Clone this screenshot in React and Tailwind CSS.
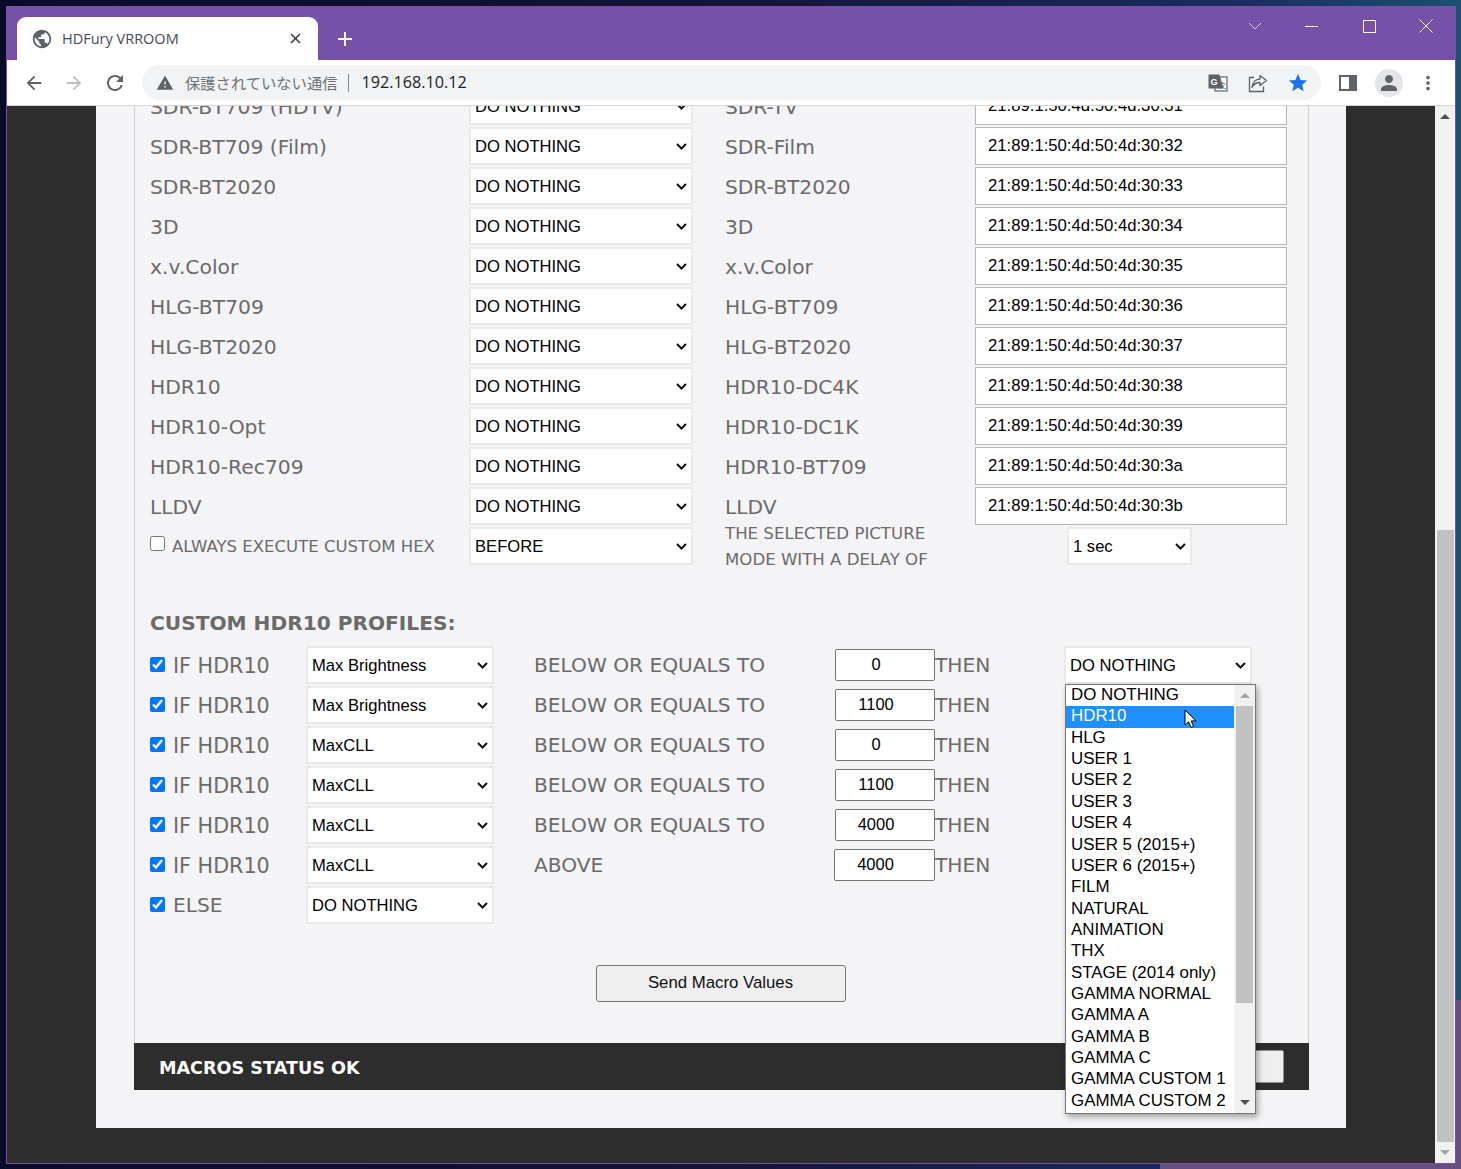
import React from "react";
import { MdArrowBack, MdArrowForward, MdRefresh, MdPublic, MdWarning, MdPerson, MdStar, MdMoreVert, MdClose, MdAdd } from "react-icons/md";

const PROFILE_ROWS = [
  ["SDR-BT709 (HDTV)", "SDR-TV", "21:89:1:50:4d:50:4d:30:31"],
  ["SDR-BT709 (Film)", "SDR-Film", "21:89:1:50:4d:50:4d:30:32"],
  ["SDR-BT2020", "SDR-BT2020", "21:89:1:50:4d:50:4d:30:33"],
  ["3D", "3D", "21:89:1:50:4d:50:4d:30:34"],
  ["x.v.Color", "x.v.Color", "21:89:1:50:4d:50:4d:30:35"],
  ["HLG-BT709", "HLG-BT709", "21:89:1:50:4d:50:4d:30:36"],
  ["HLG-BT2020", "HLG-BT2020", "21:89:1:50:4d:50:4d:30:37"],
  ["HDR10", "HDR10-DC4K", "21:89:1:50:4d:50:4d:30:38"],
  ["HDR10-Opt", "HDR10-DC1K", "21:89:1:50:4d:50:4d:30:39"],
  ["HDR10-Rec709", "HDR10-BT709", "21:89:1:50:4d:50:4d:30:3a"],
  ["LLDV", "LLDV", "21:89:1:50:4d:50:4d:30:3b"],
];

const HDR_ROWS = [
  ["Max Brightness", "BELOW OR EQUALS TO", "0"],
  ["Max Brightness", "BELOW OR EQUALS TO", "1100"],
  ["MaxCLL", "BELOW OR EQUALS TO", "0"],
  ["MaxCLL", "BELOW OR EQUALS TO", "1100"],
  ["MaxCLL", "BELOW OR EQUALS TO", "4000"],
  ["MaxCLL", "ABOVE", "4000"],
];

const MENU = ["DO NOTHING", "HDR10", "HLG", "USER 1", "USER 2", "USER 3", "USER 4", "USER 5 (2015+)", "USER 6 (2015+)", "FILM", "NATURAL", "ANIMATION", "THX", "STAGE (2014 only)", "GAMMA NORMAL", "GAMMA A", "GAMMA B", "GAMMA C", "GAMMA CUSTOM 1", "GAMMA CUSTOM 2"];

function Sel({ value, className }) {
  return (
    <div className={`relative h-[38px] ${className}`}>
      <select defaultValue={value} className="appearance-none w-full h-full bg-white border-2 border-[#e9e9e9] pl-[4px] pt-[2px] text-[16.6px] text-black font-['Liberation_Sans',sans-serif]">
        <option>{value}</option>
      </select>
      <svg width="11" height="7" viewBox="0 0 11 7" className="absolute right-[6px] top-[16px] pointer-events-none">
        <path d="M1 1l4.5 4.5L10 1" fill="none" stroke="#111" strokeWidth="2" />
      </svg>
    </div>
  );
}

function WindowControls() {
  return (
    <div className="flex items-center text-white">
      <svg width="14" height="8" viewBox="0 0 14 8" className="mr-[43px]"><path d="M1 1l6 6 6-6" fill="none" stroke="#d9c9ea" strokeWidth="1" /></svg>
      <div className="w-[13px] h-px bg-white mr-[45px]" />
      <div className="w-[13px] h-[13px] border border-white mr-[43px]" />
      <svg width="14" height="14" viewBox="0 0 14 14"><path d="M0.5 0.5l13 13M13.5 0.5l-13 13" stroke="#fff" strokeWidth="1" /></svg>
    </div>
  );
}

function TranslateIcon() {
  return (
    <svg width="20" height="20" viewBox="0 0 20 20">
      <rect x="7" y="4" width="12" height="14" fill="#fff" stroke="#5f6368" strokeWidth="1.2" />
      <path d="M0.5 1.5h11l4 14h-15z" fill="#5f6368" />
      <text x="2.5" y="11.5" fontSize="9" fontWeight="700" fill="#fff" fontFamily="Liberation Sans, sans-serif">G</text>
      <text x="11" y="15" fontSize="7" fill="#5f6368" fontFamily="Noto Sans CJK SC, sans-serif">文</text>
    </svg>
  );
}

function ShareIcon() {
  return (
    <svg width="20" height="20" viewBox="0 0 20 20" fill="none" stroke="#5f6368" strokeWidth="1.3">
      <path d="M6 4.5H1.5v14h14v-5" />
      <path d="M12 2.5l6.5 5-6.5 5V9.5c-4 0-6.5 1.5-8 5 .5-5 3.5-8.5 8-8.5z" strokeLinejoin="round" />
    </svg>
  );
}

function Cursor() {
  return (
    <svg width="14" height="20" viewBox="0 0 14 20" className="absolute left-[118px] top-[24px]">
      <path d="M1 1v15l3.6-3.2 2.4 5.6 2.6-1.1-2.4-5.4h5z" fill="#fff" stroke="#000" strokeWidth="1" />
    </svg>
  );
}

function Dropdown() {
  return (
    <div className="absolute left-[1px] top-[38px] w-[191px] h-[430px] z-10 flex bg-white border border-[#767676] shadow-[2px_3px_6px_rgba(0,0,0,0.35)] text-[16.9px] text-black font-['Liberation_Sans',sans-serif]">
      <div className="w-[168px]">
        {MENU.map((m) => (
          <div key={m} className={`h-[21.37px] pl-[5px] leading-[20px] whitespace-nowrap ${m === "HDR10" ? "bg-[#1e90ff] text-white" : ""}`}>{m}</div>
        ))}
      </div>
      <div className="w-[21px] bg-[#f1f1f1] flex flex-col items-center">
        <div className="h-[21px] flex items-center justify-center">
          <div className="w-0 h-0 border-l-[5px] border-r-[5px] border-b-[5px] border-l-transparent border-r-transparent border-b-[#a3a3a3]" />
        </div>
        <div className="w-[17px] h-[297px] bg-[#c1c1c1]" />
        <div className="mt-auto h-[21px] flex items-center justify-center">
          <div className="w-0 h-0 border-l-[5px] border-r-[5px] border-t-[5px] border-l-transparent border-r-transparent border-t-[#505050]" />
        </div>
      </div>
      <Cursor />
    </div>
  );
}

export default function App() {
  return (
    <div className="relative w-[1461px] h-[1169px] overflow-hidden pt-[6px] pl-[6px] bg-[linear-gradient(90deg,#0a0b28_0%,#141536_50%,#1b2c60_85%,#1a5070_100%)]">
      {/* wallpaper patch showing below the window */}
      <div className="absolute left-[1160px] top-[1164px] w-[301px] h-[5px] bg-[#65507f]" />
      <div className="absolute left-[1456px] top-[1000px] w-[5px] h-[169px] bg-[#65507f]" />
      <div className="relative w-[1450px] h-[1158px] border border-[#7750a7] flex flex-col bg-[#2d2d2d] font-['DejaVu_Sans',sans-serif]">
        {/* title bar */}
        <div className="h-[53px] bg-[#7750a7] flex shrink-0 relative">
          <div className="ml-[10px] mt-[10px] w-[301px] h-[43px] bg-white rounded-t-[9px] flex items-center pl-[16px] pr-[14px] font-['Open_Sans',sans-serif] text-[14.5px] text-[#45494d]">
            <MdPublic size={22} className="text-[#5f6368] -ml-[2px]" />
            <span className="ml-[9px]">HDFury VRROOM</span>
            <MdClose size={17} className="ml-auto text-[#303336]" />
          </div>
          <MdAdd size={24} className="text-white ml-[15px] mt-[20px]" />
          <div className="ml-auto mr-[22px] mt-[12px] h-[13px]"><WindowControls /></div>
        </div>
        {/* toolbar */}
        <div className="h-[46px] bg-white border-b border-[#d5d5d5] flex items-center shrink-0 text-[#5f6368]">
          <MdArrowBack size={22} className="ml-[16px]" />
          <MdArrowForward size={22} className="ml-[18px] text-[#bdc1c6]" />
          <MdRefresh size={24} className="ml-[18px]" />
          <div className="ml-[15px] w-[1179px] h-[35px] rounded-full bg-[#f1f3f4] flex items-center pl-[14px] pr-[12px]">
            <MdWarning size={18} />
            <span className="ml-[11px] text-[15.3px] text-[#6f7377] font-['Noto_Sans_CJK_JP',sans-serif] whitespace-nowrap">保護されていない通信</span>
            <div className="ml-[10px] w-px h-[18px] bg-[#85888c]" />
            <span className="ml-[13px] text-[16.2px] text-[#202124] font-['Open_Sans',sans-serif]">192.168.10.12</span>
            <div className="ml-auto flex items-center gap-[20px]">
              <TranslateIcon />
              <ShareIcon />
              <MdStar size={22} className="text-[#1a73e8] -ml-px" />
            </div>
          </div>
          <div className="ml-[18px] w-[18px] h-[16px] bg-[#5f6368] p-[2px] pr-[8px]"><div className="w-[8px] h-[12px] bg-white" /></div>
          <div className="ml-[18px] w-[28px] h-[28px] rounded-full bg-[#e3e5e8] flex items-center justify-center"><MdPerson size={24} /></div>
          <MdMoreVert size={22} className="ml-[14px]" />
        </div>
        {/* page */}
        <div className="flex-1 flex min-h-0">
          <div className="flex-1 overflow-hidden">
            <div className="ml-[89px] w-[1250px] h-[1042px] -mt-[20px] bg-[#f4f3f6] pl-[38px] pr-[37px] relative">
              <div className="h-[1004px] border-x border-[#cccccc] flex flex-col text-[#6b6b6b]">
                <div className="pl-[15px]">
                  {PROFILE_ROWS.map(([left, right, hex]) => (
                    <div key={left} className="h-10 flex items-center">
                      <div className="w-[319px] pt-[2px] text-[20.3px] whitespace-nowrap">{left}</div>
                      <Sel value="DO NOTHING" className="w-[224px]" />
                      <div className="ml-[32px] w-[250px] pt-[2px] text-[20.2px]">{right}</div>
                      <input readOnly value={hex} className="w-[312px] h-[38px] bg-white border border-[#b5b5b5] pl-[12px] pb-[1px] text-[16.7px] text-black font-['Liberation_Sans',sans-serif]" />
                    </div>
                  ))}
                  <div className="h-10 flex items-center">
                    <div className="w-[319px] flex items-center text-[16.55px] whitespace-nowrap">
                      <input type="checkbox" className="w-[15px] h-[15px] m-0 -mt-[5px]" />
                      <span className="ml-[7px] pt-[2px]">ALWAYS EXECUTE CUSTOM HEX</span>
                    </div>
                    <Sel value="BEFORE" className="w-[224px]" />
                    <div className="ml-[32px] w-[342px] pt-[2px] text-[16.6px] leading-[26px] whitespace-nowrap">THE SELECTED PICTURE<br />MODE WITH A DELAY OF</div>
                    <Sel value="1 sec" className="w-[125px]" />
                  </div>
                  <div className="mt-[40px] h-[39px] text-[20.15px] font-bold leading-[34px] whitespace-nowrap">CUSTOM HDR10 PROFILES:</div>
                  {HDR_ROWS.map(([sel, cond, val], i) => (
                    <div key={i} className="h-10 flex items-center">
                      <input type="checkbox" defaultChecked className="w-[15px] h-[15px] m-0 -mt-[1px]" />
                      <span className="ml-[8px] w-[133px] pt-[3px] text-[20.7px] whitespace-nowrap">IF HDR10</span>
                      <Sel value={sel} className="w-[188px]" />
                      <span className={`ml-[40px] text-[20.15px] whitespace-nowrap ${i === 5 ? "w-[300px]" : "w-[301px]"}`}>{cond}</span>
                      <input readOnly value={val} className={`h-[32px] bg-white border border-[#767676] rounded-[2px] text-center pr-[18px] pb-[2px] text-[16.5px] text-black font-['Liberation_Sans',sans-serif] ${i === 5 ? "w-[101px]" : "w-[100px]"}`} />
                      <span className="w-[129px] text-[20.2px]">THEN</span>
                      {i === 0 ? (
                        <div className="relative h-[38px]">
                          <Sel value="DO NOTHING" className="w-[188px]" />
                          <Dropdown />
                        </div>
                      ) : null}
                    </div>
                  ))}
                  <div className="h-10 flex items-center">
                    <input type="checkbox" defaultChecked className="w-[15px] h-[15px] m-0 -mt-[1px]" />
                    <span className="ml-[8px] w-[133px] text-[20.2px]">ELSE</span>
                    <Sel value="DO NOTHING" className="w-[188px]" />
                  </div>
                </div>
                <div className="flex justify-center mt-[40px] pr-[2px]">
                  <button className="w-[250px] h-[37px] bg-[#efefef] border border-[#767676] rounded-[3px] pb-[2px] text-[16.8px] text-[#111] font-['Liberation_Sans',sans-serif]">Send Macro Values</button>
                </div>
                <div className="mt-auto h-[47px] -mx-px bg-[#2d2d2d] flex items-center pl-[25px] pr-[25px]">
                  <span className="pt-[3px] text-white font-bold text-[17.6px] whitespace-nowrap">MACROS STATUS OK</span>
                  <div className="ml-auto w-[120px] h-[33px] bg-[#efefef] border border-[#8f8f8f] rounded-[2px]" />
                </div>
              </div>
            </div>
          </div>
          {/* scrollbar */}
          <div className="w-[20px] bg-[#f1f1f1] flex flex-col items-center shrink-0">
            <div className="h-[21px] flex items-center justify-center">
              <div className="w-0 h-0 border-l-[5px] border-r-[5px] border-b-[5px] border-l-transparent border-r-transparent border-b-[#505050]" />
            </div>
            <div className="w-[17px] h-[614px] mt-[403px] bg-[#c1c1c1]" />
            <div className="mt-auto h-[21px] flex items-center justify-center">
              <div className="w-0 h-0 border-l-[5px] border-r-[5px] border-t-[5px] border-l-transparent border-r-transparent border-t-[#a3a3a3]" />
            </div>
          </div>
        </div>
      </div>
    </div>
  );
}
